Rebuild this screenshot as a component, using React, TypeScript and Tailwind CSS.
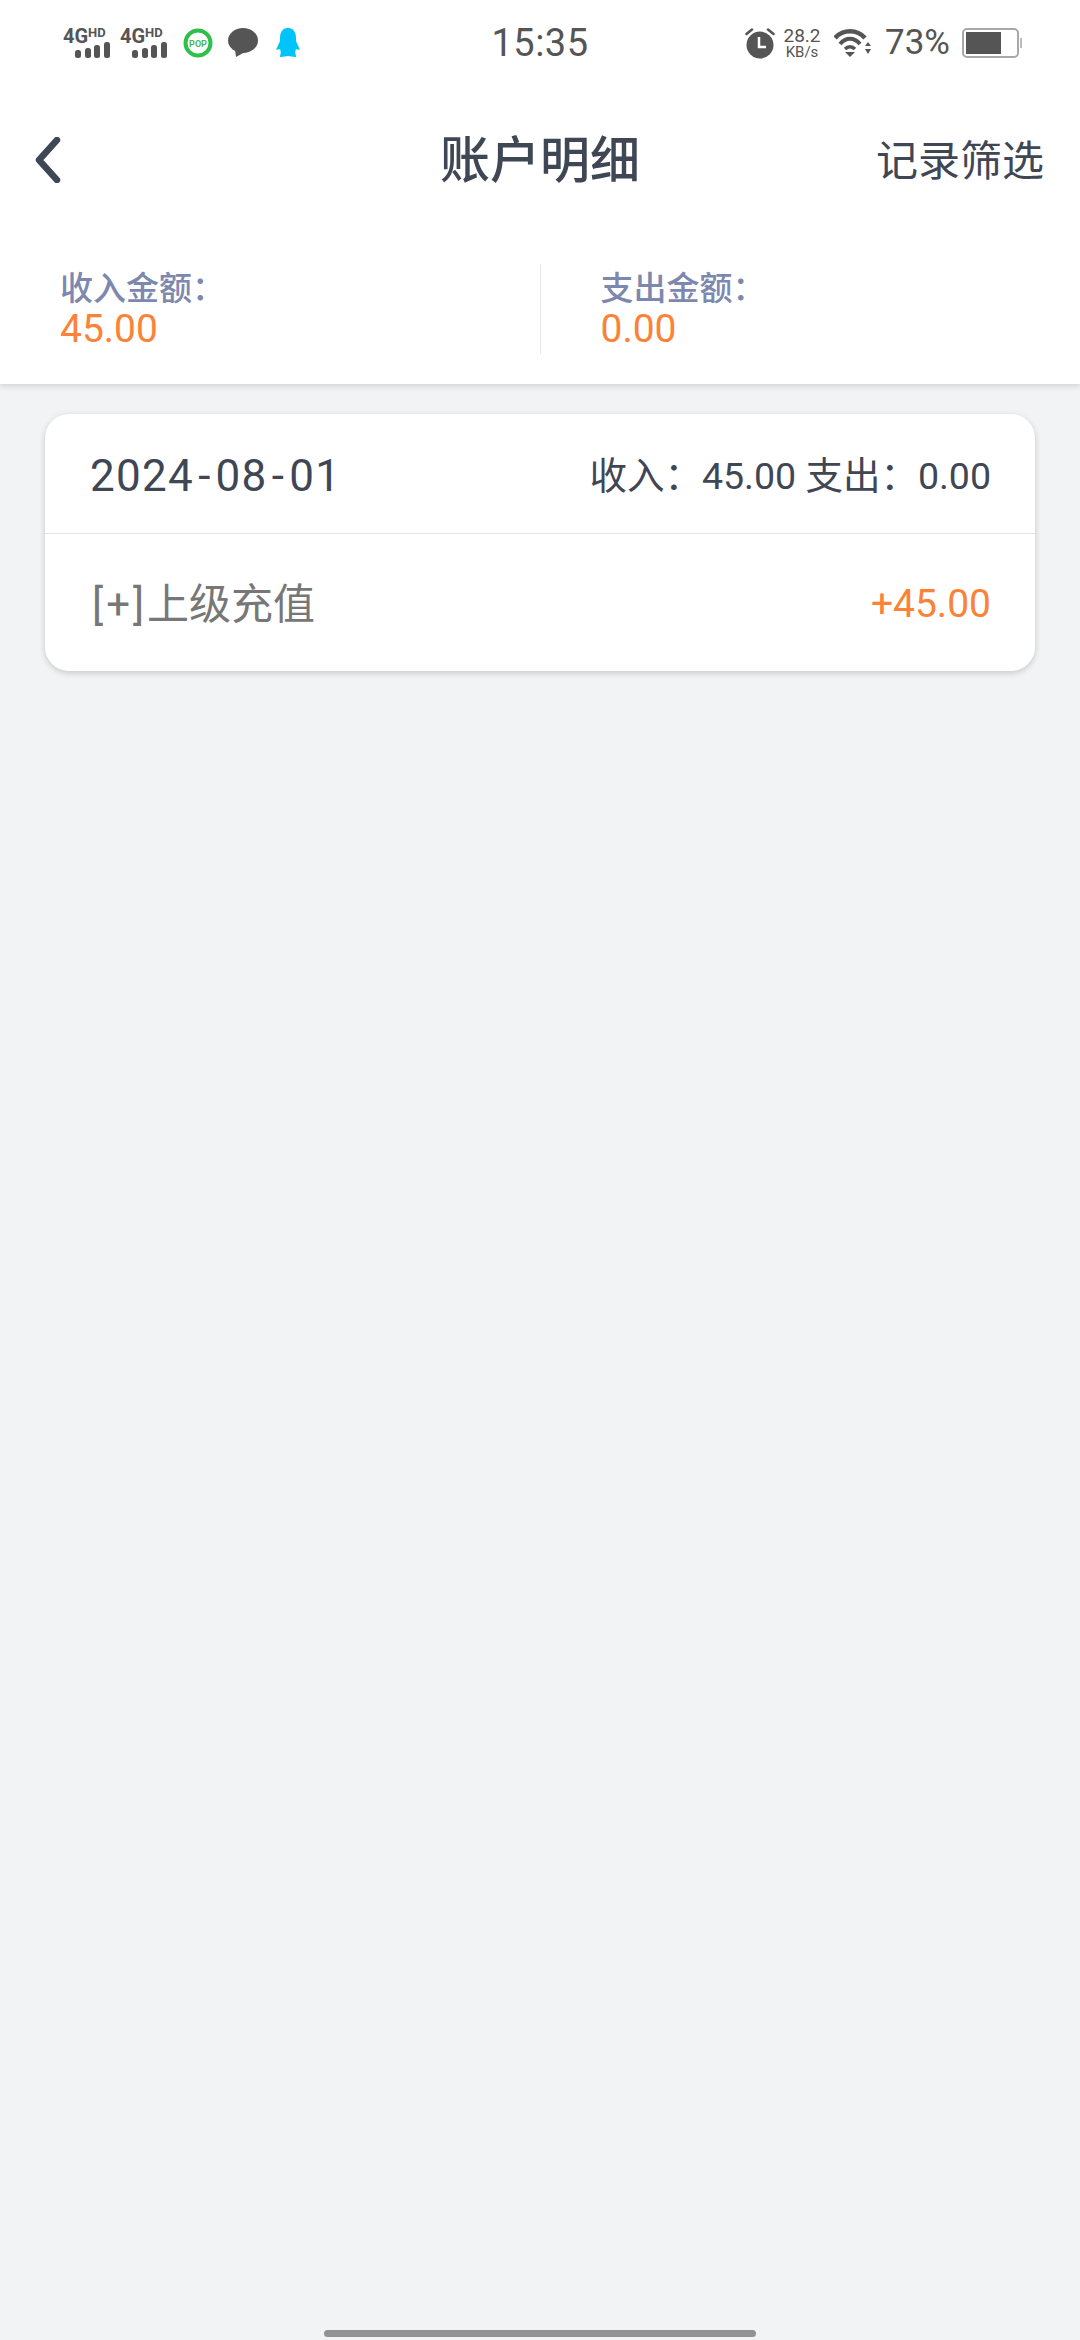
import React from 'react';

const SignalIcon = () => (
  <div className="relative w-[47px] h-[30px]">
    <span className="absolute left-0 top-[-4px] text-[20px] leading-[24px] font-bold text-[#555]">4G</span>
    <span className="absolute left-[25px] top-[-2px] text-[13px] leading-[14px] font-bold text-[#555]">HD</span>
    <svg className="absolute left-[12px] top-[14px]" width="35" height="16" viewBox="0 0 35 16" fill="#555">
      <rect x="0" y="8" width="6" height="8" rx="2.5" />
      <rect x="10" y="6" width="6" height="10" rx="2.5" />
      <rect x="19" y="3" width="6" height="13" rx="2.5" />
      <rect x="29" y="0" width="6" height="16" rx="2.5" />
    </svg>
  </div>
);

const PopIcon = () => (
  <svg width="30" height="30" viewBox="0 0 30 30">
    <circle cx="15" cy="15" r="12.5" fill="#fff" stroke="#2fc04a" strokeWidth="4" />
    <text x="15" y="18.5" textAnchor="middle" fontSize="9" fontWeight="700" fill="#4cb85c" fontFamily="Roboto, sans-serif">POP</text>
  </svg>
);

const ChatIcon = () => (
  <svg width="30" height="30" viewBox="0 0 30 30" fill="#555">
    <ellipse cx="15" cy="12.5" rx="15" ry="12.5" />
    <path d="M7 21 L8 29 L17 24 Z" />
  </svg>
);

const QQIcon = () => (
  <svg width="26" height="30" viewBox="0 0 26 30" fill="#00c3fa">
    <path d="M13 0 C7 0 5 5 5 10 L5 13 L1 22 L5 21 C6 24 6 25 5 28 L5 29 C9 29 11 28 13 28 C15 28 17 29 21 29 L21 28 C20 25 20 24 21 21 L25 22 L21 13 L21 10 C21 5 19 0 13 0 Z" />
  </svg>
);

const AlarmIcon = () => (
  <svg width="30" height="32" viewBox="0 0 30 32">
    <circle cx="15" cy="18" r="13.5" fill="#555" />
    <path d="M14 10 V20 H21" fill="none" stroke="#fff" strokeWidth="2.5" />
    <path d="M1.5 7 L7 2.5 M28.5 7 L23 2.5" stroke="#555" strokeWidth="2.5" strokeLinecap="round" />
  </svg>
);

const WifiIcon = () => (
  <svg width="38" height="30" viewBox="0 0 38 30" fill="none">
    <path d="M1 10 C9 1 23 1 31 10" stroke="#555" strokeWidth="4.5" />
    <path d="M6 16 C12 9 20 9 26 16" stroke="#555" strokeWidth="4" />
    <path d="M11 21 C14 18 18 18 21 21" stroke="#555" strokeWidth="3.5" />
    <path d="M11 24 L21 24 L16 29 Z" fill="#555" />
    <path d="M31 18 L37 18 L34 14 Z M31 21 L37 21 L34 26 Z" fill="#555" />
  </svg>
);

const BatteryIcon = () => (
  <div className="flex items-center">
    <div className="w-[57px] h-[30px] rounded-[5px] border-[2px] border-[#a8a8a8] p-[2px]">
      <div className="w-[35px] h-full bg-[#555]"></div>
    </div>
    <div className="w-[2px] h-[10px] bg-[#bbb] ml-[1px]"></div>
  </div>
);

const SummaryItem = ({ label, value }: { label: string; value: string }) => (
  <div className="flex-1 pl-[60px] pt-[4px]">
    <div className="text-[33px] leading-[41px] font-medium text-[#7d88ae]">{label}</div>
    <div className="text-[39px] leading-[41px] text-[#fb8236]">{value}</div>
  </div>
);

export default function App() {
  return (
    <div
      className="w-[1080px] h-[2340px] bg-[#f2f3f5] flex flex-col relative overflow-hidden"
      style={{ fontFamily: 'Roboto, "Noto Sans CJK SC", sans-serif' }}
    >
      <div className="bg-white shadow-[0_2px_6px_rgba(0,0,0,0.15)]">
        {/* status bar */}
        <div className="h-[86px] flex items-center pl-[63px] pr-[58px] relative">
          <div className="flex items-center gap-[10px]">
            <SignalIcon />
            <SignalIcon />
          </div>
          <div className="flex items-center">
            <div className="ml-[16px]"><PopIcon /></div>
            <div className="ml-[15px]"><ChatIcon /></div>
            <div className="ml-[17px]"><QQIcon /></div>
          </div>
          <div className="absolute left-1/2 -translate-x-1/2 text-[38px] text-[#555] tracking-[0.5px]">15:35</div>
          <div className="ml-auto flex items-center">
            <AlarmIcon />
            <div className="ml-[7px] w-[40px] text-center text-[#555]">
              <div className="text-[19px] leading-[18px]">28.2</div>
              <div className="text-[15px] leading-[15px]">KB/s</div>
            </div>
            <div className="ml-[12px]"><WifiIcon /></div>
            <div className="ml-[13px] text-[35px] text-[#555]">73%</div>
            <div className="ml-[12px]"><BatteryIcon /></div>
          </div>
        </div>

        {/* header */}
        <div className="h-[150px] flex items-center justify-between pl-[35px] pr-[36px] relative">
          <svg width="26" height="46" viewBox="0 0 26 46" fill="none" className="mb-[2px]">
            <path d="M22 3 L4 23 L22 43" stroke="#3f4654" strokeWidth="6.5" strokeLinecap="round" strokeLinejoin="round" />
          </svg>
          <div className="absolute left-1/2 -translate-x-1/2 text-[50px] font-medium text-[#3f4654]">账户明细</div>
          <div className="text-[42px] text-[#3f4654]">记录筛选</div>
        </div>

        {/* summary */}
        <div className="h-[148px] pt-[28px]">
          <div className="flex w-full h-[90px]">
            <SummaryItem label="收入金额：" value="45.00" />
            <div className="w-[1px] h-[90px] bg-[#e8e8e8]"></div>
            <SummaryItem label="支出金额：" value="0.00" />
          </div>
        </div>
      </div>

      {/* day card */}
      <div className="mx-[45px] mt-[30px] bg-white rounded-[24px] shadow-[0_2px_6px_rgba(0,0,0,0.18)]">
        <div className="h-[120px] flex items-center justify-between pl-[45px] pr-[44px] pt-[5px] border-b border-[#e3e3e3] text-[#3f4654]">
          <div className="text-[44px] tracking-[1.3px]">
            2024<span className="mx-[4px]">-</span>08<span className="mx-[4px]">-</span>01
          </div>
          <div className="text-[37.5px]">收入：45.00 支出：0.00</div>
        </div>
        <div className="h-[137px] flex items-center justify-between pl-[45px] pr-[44px] pt-[3px]">
          <div className="text-[42px] text-[#777] pl-[2px]">
            <span className="tracking-[3px]">[+]</span>上级充值
          </div>
          <div className="text-[39px] text-[#fb8236]">+45.00</div>
        </div>
      </div>

      {/* home indicator */}
      <div className="absolute left-[324px] bottom-[3px] w-[432px] h-[7px] rounded-full bg-[#929292]"></div>
    </div>
  );
}
